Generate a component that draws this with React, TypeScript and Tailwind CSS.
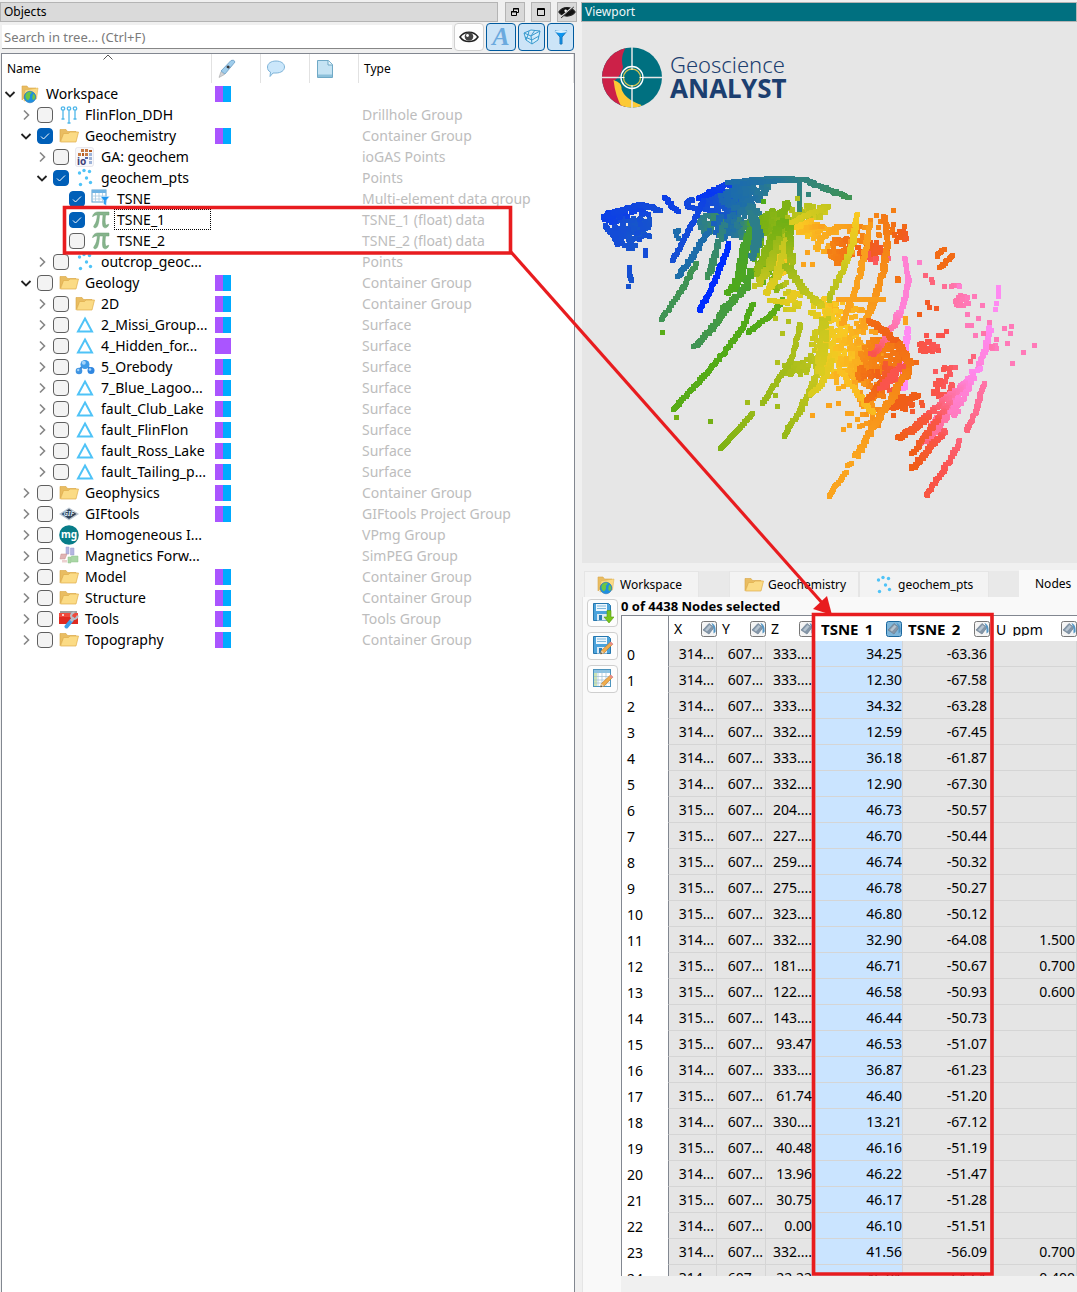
import React, { useState } from "react";

type IconName =
  | "globe" | "drill" | "folder" | "iogas" | "points" | "group" | "pi"
  | "surface" | "orebody" | "gif" | "mg" | "simpeg" | "tools";

type TreeRow = {
  level: number;
  name: string;
  icon: IconName;
  type?: string;
  arrow?: "open" | "closed";
  checked?: boolean;
  swatch?: "both" | "purple";
  focused?: boolean;
};

const treeRows: TreeRow[] = [
  { level: 0, name: "Workspace", icon: "globe", arrow: "open", swatch: "both" },
  { level: 1, name: "FlinFlon_DDH", icon: "drill", type: "Drillhole Group", arrow: "closed" },
  { level: 1, name: "Geochemistry", icon: "folder", type: "Container Group", arrow: "open", checked: true, swatch: "both" },
  { level: 2, name: "GA: geochem", icon: "iogas", type: "ioGAS Points", arrow: "closed" },
  { level: 2, name: "geochem_pts", icon: "points", type: "Points", arrow: "open", checked: true },
  { level: 3, name: "TSNE", icon: "group", type: "Multi-element data group", checked: true },
  { level: 3, name: "TSNE_1", icon: "pi", type: "TSNE_1 (float) data", checked: true, focused: true },
  { level: 3, name: "TSNE_2", icon: "pi", type: "TSNE_2 (float) data" },
  { level: 2, name: "outcrop_geoc...", icon: "points", type: "Points", arrow: "closed" },
  { level: 1, name: "Geology", icon: "folder", type: "Container Group", arrow: "open", swatch: "both" },
  { level: 2, name: "2D", icon: "folder", type: "Container Group", arrow: "closed", swatch: "both" },
  { level: 2, name: "2_Missi_Group...", icon: "surface", type: "Surface", arrow: "closed", swatch: "both" },
  { level: 2, name: "4_Hidden_for...", icon: "surface", type: "Surface", arrow: "closed", swatch: "purple" },
  { level: 2, name: "5_Orebody", icon: "orebody", type: "Surface", arrow: "closed", swatch: "both" },
  { level: 2, name: "7_Blue_Lagoo...", icon: "surface", type: "Surface", arrow: "closed", swatch: "both" },
  { level: 2, name: "fault_Club_Lake", icon: "surface", type: "Surface", arrow: "closed", swatch: "both" },
  { level: 2, name: "fault_FlinFlon", icon: "surface", type: "Surface", arrow: "closed", swatch: "both" },
  { level: 2, name: "fault_Ross_Lake", icon: "surface", type: "Surface", arrow: "closed", swatch: "both" },
  { level: 2, name: "fault_Tailing_p...", icon: "surface", type: "Surface", arrow: "closed", swatch: "both" },
  { level: 1, name: "Geophysics", icon: "folder", type: "Container Group", arrow: "closed", swatch: "both" },
  { level: 1, name: "GIFtools", icon: "gif", type: "GIFtools Project Group", arrow: "closed", swatch: "both" },
  { level: 1, name: "Homogeneous I...", icon: "mg", type: "VPmg Group", arrow: "closed" },
  { level: 1, name: "Magnetics Forw...", icon: "simpeg", type: "SimPEG Group", arrow: "closed" },
  { level: 1, name: "Model", icon: "folder", type: "Container Group", arrow: "closed", swatch: "both" },
  { level: 1, name: "Structure", icon: "folder", type: "Container Group", arrow: "closed", swatch: "both" },
  { level: 1, name: "Tools", icon: "tools", type: "Tools Group", arrow: "closed", swatch: "both" },
  { level: 1, name: "Topography", icon: "folder", type: "Container Group", arrow: "closed", swatch: "both" },
];

// X, Z, TSNE_1, TSNE_2, U_ppm (Y is elided to the same text everywhere)
const nodeRows: string[][] = [
  ["314...", "333....", "34.25", "-63.36", ""],
  ["314...", "333....", "12.30", "-67.58", ""],
  ["314...", "333....", "34.32", "-63.28", ""],
  ["314...", "332....", "12.59", "-67.45", ""],
  ["314...", "333....", "36.18", "-61.87", ""],
  ["314...", "332....", "12.90", "-67.30", ""],
  ["315...", "204....", "46.73", "-50.57", ""],
  ["315...", "227....", "46.70", "-50.44", ""],
  ["315...", "259....", "46.74", "-50.32", ""],
  ["315...", "275....", "46.78", "-50.27", ""],
  ["315...", "323....", "46.80", "-50.12", ""],
  ["314...", "332....", "32.90", "-64.08", "1.500"],
  ["315...", "181....", "46.71", "-50.67", "0.700"],
  ["315...", "122....", "46.58", "-50.93", "0.600"],
  ["315...", "143....", "46.44", "-50.73", ""],
  ["315...", "93.47", "46.53", "-51.07", ""],
  ["314...", "333....", "36.87", "-61.23", ""],
  ["315...", "61.74", "46.40", "-51.20", ""],
  ["314...", "330....", "13.21", "-67.12", ""],
  ["315...", "40.48", "46.16", "-51.19", ""],
  ["314...", "13.96", "46.22", "-51.47", ""],
  ["315...", "30.75", "46.17", "-51.28", ""],
  ["314...", "0.00", "46.10", "-51.51", ""],
  ["314...", "332....", "41.56", "-56.09", "0.700"],
  ["314...", "22.22", "46.01", "-51.61", "0.400"],
];

/* ---------- icons ---------- */

const Folder = () => (
  <>
    <path d="M1 3.500h6l1.500 2H17v3H4.500L1 15.500z" fill="#e9bd62" stroke="#d9a441" strokeWidth=".6" />
    <path d="M4.500 7.500h5l1.500-1.500h8.500l-2.500 10H1.500z" fill="#fbdb85" stroke="#dfae4a" strokeWidth=".7" />
  </>
);

const Points = () => (
  <g fill="#4fc3f7">
    <circle cx="4.500" cy="5" r="1.700" /><circle cx="9" cy="2.500" r="1.700" />
    <circle cx="14.500" cy="3.500" r="1.700" /><circle cx="11.500" cy="10" r="1.700" />
    <circle cx="15.500" cy="14.500" r="1.700" /><circle cx="5.500" cy="16.500" r="1.700" />
  </g>
);

const ItemIcon = ({ name }: { name: IconName }) => (
  <svg viewBox="0 0 20 20" className="h-5 w-5 shrink-0">
    {name === "folder" && <Folder />}
    {name === "points" && <Points />}
    {name === "globe" && (
      <>
        <path d="M2 2h5l1.500 2H16v9H5L2 16z" fill="#e9bd62" stroke="#dba94a" strokeWidth=".6" />
        <path d="M5 6l13-2-1.500 11L4 17z" fill="#fbdb85" stroke="#dfae4a" strokeWidth=".5" />
        <circle cx="10" cy="13" r="5.800" fill="#1e8fe0" stroke="#1565a8" strokeWidth=".5" />
        <path d="M5.500 11c1-3 4-3.500 6-3 .5 1.500-2 2-1.500 4s-1 3-2 4.500c-2-1-3-3-2.500-5.500zM13 10c1.500 0 2.500 2 2 4s-2 2.500-2.500 1 .2-3.500.5-5z" fill="#6cc644" />
      </>
    )}
    {name === "drill" && (
      <g fill="none" stroke="#4fb7ea" strokeWidth="1.300">
        <circle cx="4" cy="3.500" r="1.700" /><circle cx="10" cy="3.500" r="1.700" /><circle cx="16" cy="3.500" r="1.700" />
        <path d="M4 5.200V14M10 5.200V18M16 5.200V14M2.500 14h3M8.500 18h3M14.500 14h3" />
      </g>
    )}
    {name === "iogas" && (
      <>
        <rect x=".5" y=".5" width="18" height="19" rx="2" fill="#f7f7fa" stroke="#dcdce4" strokeWidth=".6" />
        <path d="M6 2h3v3H6zM10 2h3v3h-3zM3 6h3v3H3zM10 6h3v3h-3z" fill="#c77a44" />
        <path d="M14 3h3v2h-3zM7 6h2v3H7z" fill="#b55c22" />
        <path d="M14 6h3v3h-3zM14 10h3v3h-3zM14 14h3v3h-3z" fill="#9db3d8" />
        <path d="M10 10h3v2h-3z" fill="#5a6aa8" />
        <text x="2" y="18" fontSize="10" fontWeight="700" fill="#3d4179" fontFamily="Noto Sans, sans-serif">io</text>
      </>
    )}
    {name === "group" && (
      <>
        <rect x="1" y="1" width="14" height="12" fill="#fff" stroke="#5a9fd0" />
        <path d="M1 1h14v3H1z" fill="#6fb4e4" />
        <path d="M1 7h14M1 10h14M4.500 4v9M8 4v9M11.500 4v9" stroke="#a8cbe2" strokeWidth=".8" />
        <path d="M9.500 7.500h9l-3.300 4v5l-2.500-1.500v-3.500z" fill="#1e96f0" stroke="#e2f2ff" strokeWidth=".5" />
      </>
    )}
    {name === "pi" && (
      <path d="M1.500 6.500C2.500 3 4.500 2 7 2h11v3h-3.500c-.4 4-.7 8 .2 9.500.6 1 1.800.6 2.500-.5l.6.500c-.8 2.300-2 3.300-3.500 3.300-3.300 0-3-4-2.300-12.800H8.500c-.3 4.500-.8 8-1.800 10.500-.7 1.700-1.700 2.300-2.700 2.300-1.400 0-1.800-1.300-.8-2.500C5.500 12.500 6 9 6.400 5c-2 0-3.200.1-4.200 1.500z" fill="#86b48c" stroke="#6b9c72" strokeWidth=".5" />
    )}
    {name === "surface" && <path d="M10 3.500l7 13H3z" fill="none" stroke="#4fc3f7" strokeWidth="2" />}
    {name === "orebody" && (
      <>
        <path d="M3 14l7-7 7 7" stroke="#3b7fd0" strokeWidth="2" fill="none" />
        <circle cx="10" cy="7.500" r="4.500" fill="#3f9be8" /><circle cx="4" cy="14" r="3.300" fill="#3f94e2" />
        <circle cx="16" cy="13.500" r="3.500" fill="#2f86e0" /><circle cx="8.800" cy="5.800" r="2" fill="#a5d4fa" />
        <circle cx="3.200" cy="13" r="1.200" fill="#a5d4fa" /><circle cx="15" cy="12.500" r="1.300" fill="#a5d4fa" />
      </>
    )}
    {name === "gif" && (
      <>
        <path d="M0 10l10-6.500L20 10l-10 6.500z" fill="#b9c4d0" />
        <path d="M2.500 10L10 5l7.500 5-7.500 5z" fill="#2e4158" />
        <text x="4.500" y="12.300" fontSize="6.500" fontStyle="italic" fontWeight="700" fill="#cfe0f0" fontFamily="Noto Sans, sans-serif">GIF</text>
      </>
    )}
    {name === "mg" && (
      <>
        <circle cx="10" cy="10" r="9.800" fill="#087d89" />
        <text x="10" y="13" textAnchor="middle" fontSize="10" fontWeight="700" fill="#fff" fontFamily="Noto Sans, sans-serif">mg</text>
      </>
    )}
    {name === "simpeg" && (
      <>
        <path d="M7 1h3v7H7zM11.500 2H15v7h-3.500z" fill="#b4b5e0" stroke="#9c9dd0" strokeWidth=".5" />
        <path d="M2 8h6l-2 5H1z" fill="#e0b4b4" stroke="#c89090" strokeWidth=".5" />
        <path d="M12.500 10H19v6h-6.500zM9 11h3v6H9z" fill="#a9d6a5" stroke="#8cc088" strokeWidth=".5" />
        <path d="M3 14h5v2.500H3z" fill="#ecd0d0" />
      </>
    )}
    {name === "tools" && (
      <>
        <path d="M1 2h17v2H1z" fill="#9b9b9b" /><path d="M0 4h19v11H0z" fill="#df2a20" />
        <path d="M0 4h19v4H0z" fill="#ef4a3c" /><circle cx="4" cy="6" r="1" fill="#fff" />
        <path d="M7.500 17.500l5-6" stroke="#3d9fe8" strokeWidth="4" strokeLinecap="round" />
        <path d="M12 12l3-3.500" stroke="#b8bec6" strokeWidth="3" />
        <path d="M18.500 6.500a3.200 3.200 0 1 1-3-3" fill="none" stroke="#b8bec6" strokeWidth="2.200" />
      </>
    )}
  </svg>
);

const Arrow = ({ dir }: { dir?: "open" | "closed" }) => (
  <svg viewBox="0 0 12 12" className="h-3 w-3 shrink-0" fill="none">
    {dir === "open" && <path d="M1.500 4L6 8.500 10.500 4" stroke="#222" strokeWidth="1.800" />}
    {dir === "closed" && <path d="M4 1.500L8.500 6 4 10.500" stroke="#868686" strokeWidth="1.600" />}
  </svg>
);

const PaintIcon = ({ active }: { active?: boolean }) => (
  <svg viewBox="0 0 16 16" className="h-4 w-4 shrink-0">
    <rect x=".5" y=".5" width="15" height="15" rx="2" fill={active ? "#7fb6da" : "#f4f4f4"} stroke={active ? "#1a679e" : "#777"} />
    <path d="M2 9l6-6.500 5 4L8 13z" fill="#8496a8" stroke="#6d7f91" strokeWidth=".7" />
    <path d="M4 9l4.500-5 2 1.500L6 10.500z" fill="#b5c3cf" />
    <path d="M10.500 2c3 1 4.500 4 4 9l-2 1.500V7z" fill="#5295c4" />
  </svg>
);

const SaveIcon = ({ kind }: { kind: "export" | "edit" | "table" }) => (
  <svg viewBox="0 0 22 22" className="h-[22px] w-[22px]">
    {kind === "table" ? (
      <>
        <rect x="1.500" y="1.500" width="17" height="17" fill="#fff" stroke="#4d94bd" />
        <path d="M2 2h16v3H2z" fill="#8cc4e4" />
        <path d="M2 5h3v13H2z" fill="#cbe4b4" />
        <path d="M2 8.500h16M2 12h16M2 15h16M6 2v16M10 2v16M14 2v16" stroke="#9ebfd2" strokeWidth=".7" />
      </>
    ) : (
      <>
        <path d="M1.500 1.500h15l2 2v15h-17z" fill="#4ba3dc" stroke="#2677ae" />
        <path d="M4 2h11v7H4z" fill="#eef7fd" /><path d="M5 4h9M5 6.500h9" stroke="#7fb7da" />
        <path d="M5 12h10v6.500H5z" fill="#dceaf4" /><path d="M7 13h3v5H7z" fill="#2d7db5" />
      </>
    )}
    {kind === "export" ? (
      <path d="M15 8.500h4V15h3l-5 6-5-6h3z" fill="#7ac51c" stroke="#559a10" strokeWidth=".6" />
    ) : (
      <>
        <path d="M8.500 19l1-3.500L18.500 7l2.200 2.200-8.700 8.800z" fill="#f0ac4c" stroke="#b5762a" strokeWidth=".6" />
        <path d="M17.300 8.200L18.800 6.700l2.400 2.400-1.500 1.500z" fill="#e88a8a" />
        <path d="M8.500 19l1-3.500 2.500 2.500z" fill="#e8d4b4" /><path d="M8.500 19l.5-1.700 1.200 1.200z" fill="#333" />
      </>
    )}
  </svg>
);

const Eye = ({ off }: { off?: boolean }) => (
  <svg viewBox="0 0 20 14" className="h-[14px] w-5" fill="none">
    <path d="M1 7c4-6.500 14-6.500 18 0-4 6-14 6-18 0z" fill={off ? "#111" : "#fff"} stroke="#222" strokeWidth="1.500" />
    <circle cx="10" cy="6.500" r="4.300" fill={off ? "#111" : "#444"} />
    <circle cx="8.500" cy="5.500" r="1.400" fill="#fff" />
    {off && <path d="M3 13L17 1" stroke="#d9d9d9" strokeWidth="2" />}
    {off && <path d="M3.500 13.500L17.500 1.500" stroke="#111" strokeWidth="1" />}
  </svg>
);

/* ---------- point cloud ---------- */

const ramp: number[][] = [
  [0, 44, 255], [20, 76, 215], [28, 108, 172], [44, 126, 138], [64, 148, 84], [78, 170, 24],
  [126, 178, 20], [176, 192, 28], [218, 204, 32], [250, 200, 34], [250, 164, 30],
  [244, 126, 20], [240, 94, 24], [250, 84, 76], [255, 116, 168], [255, 140, 250],
];

const rampColor = (value: number) => {
  const v = Math.max(0, Math.min(14.999, value));
  const i = Math.floor(v);
  const mix = ramp[i].map((c, k) => Math.round(c + (ramp[i + 1][k] - c) * (v - i)));
  return `rgb(${mix.join(",")})`;
};

// [value at start, value at end, spread, x1, y1, x2, y2, ...]
const strands: number[][] = [
  [0.6, 1, 5, 603, 217, 618, 211, 640, 204, 660, 210],
  [1, 1, 3, 605, 225, 612, 233, 618, 244], [1, 1.2, 1, 629, 267, 629, 275, 631, 280],
  [1, 1, 0, 645, 250, 645, 255], [0.6, 0.7, 3, 664, 197, 677, 211],
  [0.8, 0.9, 3, 685, 203, 692, 199], [0.8, 0.9, 2, 686, 206, 695, 208],
  [0.3, 0.4, 3, 698, 198, 712, 192], [0.3, 0.6, 9, 710, 192, 720, 188, 728, 184],
  [2, 4, 6, 728, 182, 757, 179, 777, 178, 803, 179, 830, 190, 847, 197],
  [2, 3, 4, 742, 183, 780, 180, 795, 180],
  [0.7, 1.1, 2, 703, 200, 690, 227, 672, 260], [2, 2.100, 3, 708, 230, 693, 255, 677, 276],
  [0, 0, 2, 729, 243, 715, 280, 699, 310],
  [4, 4, 2, 696, 263, 683, 287, 661, 319], [3, 3.900, 4, 724, 224, 717, 245, 708, 277],
  [4.500, 5, 7, 753, 222, 744, 250, 740, 275, 729, 293], [3, 3, 7, 751, 212, 758, 235, 752, 258],
  [4.800, 4, 5, 751, 270, 745, 288, 724, 308, 712, 328, 695, 346],
  [4.400, 4.300, 7, 730, 303, 721, 314],
  [5, 5.200, 2, 752, 304, 742, 328, 723, 353, 704, 375, 673, 409],
  [5.600, 5, 3, 783, 299, 772, 313, 748, 332],
  [7, 6.500, 2, 800, 324, 791, 360, 777, 380, 762, 403], [6.500, 6, 1, 752, 413, 736, 431, 720, 448],
  [8, 6.500, 4, 826, 345, 815, 378, 801, 408, 783, 436],
  [8.400, 8, 3, 831, 360, 822, 383, 811, 394],
  [3, 3.500, 1, 799, 184, 799, 209], [6, 6, 5, 787, 202, 780, 215],
  [5.700, 6.500, 8, 783, 220, 770, 245, 756, 275], [6.500, 7.500, 6, 779, 238, 770, 265, 756, 286],
  [7.500, 8.200, 5, 785, 240, 777, 275, 765, 293],
  [5.800, 6.800, 5, 788, 225, 791, 262],
  [6.500, 7.800, 6, 786, 265, 803, 290, 822, 306],
  [8, 8.500, 5, 770, 300, 788, 302, 795, 292],
  [7.500, 8, 3, 828, 206, 812, 212, 792, 222],
  [9.300, 9.800, 4, 798, 232, 820, 226, 836, 232],
  [9.500, 10, 6, 808, 227, 822, 226], [9.700, 10.200, 5, 820, 238, 838, 226, 856, 226],
  [9, 7, 3, 857, 214, 852, 243, 843, 268, 828, 300],
  [10.200, 10, 3, 869, 224, 864, 255, 855, 290, 842, 323],
  [11.200, 10, 4, 884, 216, 887, 240, 882, 275, 873, 303, 861, 326],
  [11.500, 11.500, 1, 898, 280, 897, 278], [10, 10.200, 1, 838, 299, 883, 299],
  [14.500, 14.600, 2, 905, 258, 908, 280, 903, 305, 896, 320], [14.500, 13, 5, 899, 312, 886, 338, 872, 354],
  [14.900, 14.900, 3, 907, 328, 905, 356, 904, 388],
  [11.500, 12, 6, 869, 320, 883, 330, 898, 343], [11.500, 11, 6, 898, 343, 909, 362, 905, 378],
  [12, 12, 9, 893, 408, 900, 402, 918, 394],
  [11, 10, 5, 907, 370, 893, 395, 874, 424, 856, 456], [10, 10, 2, 850, 463, 848, 465],
  [10, 10, 2, 845, 472, 828, 496], [9.200, 9.400, 4, 838, 370, 855, 390, 872, 412],
  [12.500, 11.500, 5, 892, 368, 868, 400], [13, 13, 8, 900, 365, 880, 388],
  [7.500, 8, 8, 824, 318, 822, 345, 819, 373],
  [14.500, 13.500, 9, 965, 382, 951, 405, 934, 425, 922, 443],
  [14.300, 13.800, 7, 958, 400, 945, 415, 930, 437],
  [14.900, 14.600, 3, 990, 327, 985, 348, 976, 370], [14.900, 14.300, 8, 976, 368, 965, 388, 952, 415],
  [14.600, 12, 5, 966, 382, 943, 400, 924, 418, 898, 438],
  [12.800, 12, 6, 928, 416, 912, 430, 900, 437],
  [13.800, 12, 4, 948, 402, 935, 422, 912, 453],
  [13.300, 12, 5, 946, 430, 930, 447, 912, 468],
  [14, 13.500, 2, 983, 383, 975, 412, 966, 430], [13.500, 12.800, 3, 960, 440, 948, 462, 926, 495],
  [11.600, 11.600, 2, 936, 256, 943, 249], [11.600, 11.600, 2, 940, 267, 952, 255],
  [14.900, 14.900, 0, 998, 287, 998, 296], [14, 14.500, 3, 954, 285, 960, 286],
];

// [cx, cy, rx, ry, count, lowest value, highest value]
const blobs: number[][] = [
  [628, 228, 18, 13, 90, 0.9, 1.5], [643, 228, 8, 14, 20, 1, 1.3], [628, 246, 10, 4, 8, 1.1, 1.3],
  [640, 212, 18, 8, 20, 0.6, 1], [611, 216, 9, 6, 16, 0.5, 0.8], [676, 234, 5, 5, 6, 1.8, 2.2],
  [723, 205, 22, 12, 120, 0.8, 2], [740, 196, 20, 11, 110, 1.8, 2.5], [710, 224, 13, 10, 45, 2.8, 4],
  [725, 226, 16, 12, 50, 1.4, 3], [758, 189, 14, 5, 20, 2.2, 3], [744, 215, 16, 12, 45, 2, 3.2],
  [739, 235, 12, 18, 22, 2, 4.2], [753, 234, 9, 18, 40, 3.6, 5],
  [774, 224, 15, 14, 150, 5.8, 6.7], [778, 252, 14, 22, 60, 6, 7.6], [761, 258, 12, 20, 34, 5, 7],
  [774, 277, 14, 16, 30, 5.2, 7.8], [782, 257, 8, 17, 60, 8.4, 9.6], [800, 216, 17, 10, 36, 6.8, 8],
  [814, 211, 15, 8, 24, 7, 7.9], [809, 228, 15, 8, 50, 8.8, 10], [823, 240, 14, 12, 14, 9.4, 10.2],
  [824, 310, 16, 12, 46, 8, 10], [843, 320, 23, 18, 50, 8.4, 10.2], [790, 300, 16, 10, 14, 7.5, 8.3],
  [796, 368, 14, 7, 40, 6.8, 7.2], [815, 360, 10, 8, 10, 7.1, 7.6], [816, 340, 6, 12, 14, 7.5, 8.2],
  [841, 250, 12, 14, 55, 10.8, 11.8], [857, 240, 12, 18, 18, 10, 11.5], [872, 249, 16, 8, 36, 11.8, 12.6],
  [875, 257, 14, 5, 12, 12.8, 13.6], [882, 226, 24, 12, 14, 10.2, 12], [900, 236, 7, 6, 12, 11.8, 12.4],
  [840, 350, 22, 26, 150, 8.4, 9.6], [859, 352, 24, 28, 110, 9.2, 10.6], [882, 355, 22, 18, 150, 10.6, 11.6],
  [864, 374, 10, 8, 26, 11, 12], [890, 377, 15, 15, 34, 11.8, 13.8], [869, 391, 17, 12, 22, 9.8, 11.8],
  [866, 415, 17, 13, 26, 9.8, 11], [843, 380, 14, 9, 14, 9.4, 10.2],
  [927, 346, 11, 6, 38, 12.8, 13.2], [949, 370, 7, 7, 10, 13, 13.4], [943, 389, 11, 10, 26, 12.9, 13.3],
  [906, 402, 15, 7, 30, 11.8, 12.5], [962, 300, 8, 7, 20, 14, 14.3], [992, 347, 5, 3, 8, 14, 14.3],
];

// single samples: [x, y, value]
const singles: number[][] = [
  [662, 332, 5.2], [676, 417, 5.8], [710, 421, 5.8], [747, 402, 6.7], [775, 395, 6.7], [777, 406, 6.7],
  [777, 362, 7], [782, 333, 7], [775, 318, 7], [788, 321, 7], [763, 201, 5], [797, 198, 7], [808, 194, 3.3],
  [812, 415, 10], [828, 405, 10], [812, 264, 10], [807, 252, 10], [803, 264, 10], [829, 251, 11],
  [893, 210, 11], [919, 262, 14.4], [925, 275, 13.5], [931, 279, 13.5], [932, 282, 13.5], [944, 286, 13.8],
  [951, 286, 14], [996, 303, 14.9], [995, 309, 14.9], [982, 305, 14.2], [974, 296, 14.2], [967, 314, 14.2],
  [978, 318, 14.2], [989, 322, 14.2], [971, 325, 14.2], [967, 325, 14.2], [975, 335, 14.2], [983, 333, 14],
  [1004, 328, 14.2], [1011, 326, 14.2], [1010, 333, 14.2], [996, 339, 14.2], [1007, 343, 14.2],
  [1034, 345, 14.2], [1023, 352, 14.2], [1012, 363, 14.2], [927, 302, 12.3], [929, 307, 12.3],
  [936, 308, 12.3], [919, 314, 12], [938, 335, 13], [942, 335, 13], [946, 331, 13], [926, 335, 13],
  [935, 371, 13.2], [973, 356, 13.5], [970, 361, 13.5], [829, 405, 10], [838, 403, 10], [847, 413, 10],
  [843, 429, 10], [849, 425, 10], [898, 279, 11.3], [897, 280, 11.3], [905, 322, 10], [905, 318, 10],
  [916, 362, 11.6], [893, 415, 12], [912, 411, 12.5], [922, 405, 12.5], [938, 350, 13], [628, 286, 1.2],
];

const buildCloud = () => {
  let seed = 7;
  const rand = () => {
    seed = (seed * 16807) % 2147483647;
    return seed / 2147483647;
  };
  const cells: { x: number; y: number; fill: string }[] = [];
  const put = (x: number, y: number, v: number) =>
    cells.push({ x: Math.round(x - 2), y: Math.round(y - 2), fill: rampColor(v) });

  blobs.forEach(([cx, cy, rx, ry, count, low, high]) => {
    for (let i = 0; i < count; i++) {
      const a = rand() * Math.PI * 2;
      const r = Math.sqrt(rand());
      const x = Math.cos(a) * r;
      put(cx + x * rx, cy + Math.sin(a) * r * ry, low + (high - low) * ((x + 1) / 2) * (0.7 + rand() * 0.3));
    }
  });
  strands.forEach(([start, end, spread, ...pts]) => {
    const last = pts.length / 2 - 1;
    for (let i = 0; i < last; i++) {
      const [x1, y1, x2, y2] = pts.slice(i * 2, i * 2 + 4);
      const steps = Math.max(1, Math.ceil(Math.hypot(x2 - x1, y2 - y1) / (spread > 4 ? 1 : 1.5)));
      for (let s = 0; s <= steps; s++) {
        const k = s / steps;
        const v = start + (end - start) * ((i + k) / last);
        put(x1 + (x2 - x1) * k + (rand() - 0.5) * spread, y1 + (y2 - y1) * k, v);
      }
    }
  });
  singles.forEach(([x, y, v]) => put(x, y, v));
  return cells;
};

const cloud = buildCloud();

const Viewport = () => (
  <svg viewBox="582 22 495 541" preserveAspectRatio="xMinYMin meet" className="h-full w-full">
    <clipPath id="disc"><circle cx="632" cy="77.500" r="30" /></clipPath>
    <g clipPath="url(#disc)">
      <path d="M602 47h60v61h-60z" fill="#007080" />
      <path d="M602 47h24q-6 10-3 20-2 9-9 14 4 12 10 20l2 10h-24z" fill="#cc2148" />
      <path d="M613.500 80q9 3 8 9 3 10 20 16l-4 5h-14q-8-12-10-30z" fill="#fcc935" />
    </g>
    <path d="M632 47v61M602 77.500h60" stroke="#e6e6e6" strokeWidth="1.500" />
    <circle cx="632" cy="77.500" r="11" fill="#007080" stroke="#fff" strokeWidth="1.300" />
    <circle cx="632" cy="77.500" r="8.500" fill="none" stroke="#d6c451" strokeWidth="1.300" />
    <path d="M632 66v4M632 85v4M620.500 77.500h4M639.500 77.500h4" stroke="#fff" />
    <text x="670" y="73" fontSize="22" fontWeight="300" fill="#1c3f70" fontFamily="Noto Sans, sans-serif">Geoscience</text>
    <text x="670" y="98" fontSize="26" fontWeight="700" fill="#1c3f70" fontFamily="Noto Sans, sans-serif">ANALYST</text>
    <g shapeRendering="crispEdges">
      {cloud.map((c, i) => (
        <rect key={i} x={c.x} y={c.y} width="5" height="5" fill={c.fill} />
      ))}
    </g>
  </svg>
);

/* ---------- panels ---------- */

const treeGrid = "grid grid-cols-[209px_49px_49px_49px_1fr]";

const indent = ["pl-[2px]", "pl-[18px]", "pl-[34px]", "pl-[50px]"];

const ObjectsTree = () => {
  const [checked, setChecked] = useState(treeRows.map((row) => !!row.checked));

  return (
    <div role="tree" aria-label="Objects" className="ml-px mr-[2px] mt-[2px] min-h-0 flex-1 overflow-hidden border border-b-0 border-[#828790] bg-white">
      <div className={`${treeGrid} h-[29px] text-xs`}>
        <div className="relative flex items-center pl-[5px]">
          Name
          <svg viewBox="0 0 10 6" className="absolute left-[101px] top-0 h-[6px] w-[10px]">
            <path d="M.5 5.500L5 1l4.500 4.500" fill="none" stroke="#555" />
          </svg>
        </div>
        <div className="flex items-center border-l border-[#e2e2e2] pl-[5px]">
          <svg viewBox="0 0 20 20" className="h-5 w-5">
            <path d="M2 18.500l2-6 3.500 3z" fill="#cfd3d8" stroke="#999" strokeWidth=".5" />
            <path d="M4 12L14 1.500q3-1.500 4 1.500L8 15z" fill="#9fcdec" stroke="#6a9dc4" strokeWidth=".8" />
            <path d="M9 8l2-2 2.500 2-2 2z" fill="#6b7784" /><circle cx="11" cy="8" r="1" fill="#222" />
          </svg>
        </div>
        <div className="flex items-center border-l border-[#e2e2e2] pl-[5px]">
          <svg viewBox="0 0 20 20" className="h-5 w-5">
            <path d="M10 2c5 0 8.500 2.500 8.500 6S15 14 10 14l-3 0-3 3.500.5-4.500C2 12 1.500 10 1.500 8 1.500 4.500 5 2 10 2z" fill="#cbe7fb" stroke="#7fb4d8" />
          </svg>
        </div>
        <div className="flex items-center border-l border-[#e2e2e2] pl-[5px]">
          <svg viewBox="0 0 20 20" className="h-5 w-5">
            <path d="M2.500 1.500h11l4 4v13h-15z" fill="#c5e3f3" stroke="#6fa9c6" />
            <path d="M13 1.500v4.500h4.500" fill="#eaf6fc" stroke="#6fa9c6" /><path d="M3 15.500h14v2.500H3z" fill="#8cc0da" />
          </svg>
        </div>
        <div className="flex items-center border-l border-r border-[#e2e2e2] pl-[5px]">Type</div>
      </div>

      {treeRows.map((row, i) => (
        <div key={row.name} role="treeitem" aria-level={row.level + 1} className={`${treeGrid} h-[21px] text-sm leading-[21px]`}>
          <div className={`flex min-w-0 items-center ${indent[row.level]}`}>
            <Arrow dir={row.arrow} />
            {row.level > 0 && (
              <span className="relative ml-[5px] mr-[2px] flex h-4 w-4 shrink-0">
                <input
                  id={`item-${i}`}
                  type="checkbox"
                  checked={checked[i]}
                  onChange={() => setChecked(checked.map((c, k) => (k === i ? !c : c)))}
                  className="h-4 w-4 appearance-none rounded-[4px] border border-[#5f5f5f] bg-[#f3f3f3] checked:border-[#005fb8] checked:bg-[#005fb8]"
                />
                {checked[i] && (
                  <svg viewBox="0 0 16 16" className="pointer-events-none absolute inset-0 h-4 w-4">
                    <path d="M4 8.500l2.500 2.500L12 5.500" fill="none" stroke="#fff" />
                  </svg>
                )}
              </span>
            )}
            <span className="ml-1 flex"><ItemIcon name={row.icon} /></span>
            <label
              htmlFor={`item-${i}`}
              className={row.focused
                ? "ml-[3px] h-[21px] w-[98px] border border-dotted border-black pl-[2px] leading-[19px]"
                : "ml-[6px] whitespace-nowrap"}
            >
              {row.name}
            </label>
          </div>
          <div className="flex items-center pl-1">
            {row.swatch && (
              <div className="flex h-4 w-4 bg-[#aa55ff]">
                {row.swatch === "both" && <div className="ml-2 h-4 w-2 bg-[#00aaff]" />}
              </div>
            )}
          </div>
          <div />
          <div />
          <div className="truncate pl-1 text-[#bdbdbd]">{row.type}</div>
        </div>
      ))}
    </div>
  );
};

const ObjectsPanel = () => (
  <section className="flex min-h-0 min-w-0 flex-col pt-[2px]">
    <div className="flex h-5 gap-[6px]">
      <h2 className="mr-px flex flex-1 items-center border border-[#b4b4b4] bg-[#dadada] pl-[3px] text-xs">Objects</h2>
      <button aria-label="Float" className="flex w-5 items-center justify-center border border-[#b4b4b4] bg-[#d9d9d9]">
        <svg viewBox="0 0 10 10" className="h-[10px] w-[10px]" fill="none" stroke="#000">
          <path d="M3.500 4V1.500h5v4H6.500M1.500 4.500h5v4h-5zM3 2h6M1 5h6" />
        </svg>
      </button>
      <button aria-label="Maximize" className="flex w-5 items-center justify-center border border-[#b4b4b4] bg-[#d9d9d9]">
        <svg viewBox="0 0 10 10" className="h-[10px] w-[10px]" fill="none" stroke="#000">
          <path d="M1.500 1.500h7v7h-7zM1 2.500h8" />
        </svg>
      </button>
      <button aria-label="Hide" className="flex w-5 items-center justify-center border border-[#b4b4b4] bg-[#d9d9d9]">
        <Eye off />
      </button>
    </div>
    <div className="mr-[3px] mt-px flex h-7 items-center gap-[2px] pl-[2px]">
      <input
        type="text"
        aria-label="Search in tree"
        placeholder="Search in tree... (Ctrl+F)"
        className="h-6 min-w-0 flex-1 border-b border-[#868686] bg-white pl-[2px] text-[13px] placeholder:text-[#7b7b7b]"
      />
      <button aria-label="Visible" className="flex h-7 w-[30px] items-center justify-center rounded-[4px] border border-[#d0d0d0] bg-[#fdfdfd]">
        <Eye />
      </button>
      <button aria-label="Match case" className="flex h-7 w-[30px] items-center justify-center rounded-[4px] border border-[#005a9e] bg-[#cce4f7] font-['Liberation_Serif',serif] text-[26px] font-bold italic leading-none text-[#6aa9de]">
        A
      </button>
      <button aria-label="Objects" className="flex h-7 w-[27px] items-center justify-center rounded-[4px] border border-[#005a9e] bg-[#cce4f7]">
        <svg viewBox="0 0 18 16" className="h-4 w-[18px]" fill="#d6effc" stroke="#3a9bcf">
          <path d="M1 4l7-3 9 1-2 9-6 4-6-4zM1 4l7 3 9-5M8 7l1 8M6 2l-1 4-2 5M2 8l7 3 7-4M8 7l4-6" />
        </svg>
      </button>
      <button aria-label="Filter" className="flex h-7 w-[27px] items-center justify-center rounded-[4px] border border-[#005a9e] bg-[#cce4f7]">
        <svg viewBox="0 0 14 16" className="h-4 w-[14px]">
          <path d="M1 2l5 6v7h2V8l5-6z" fill="#0c96f2" stroke="#1677bd" /><ellipse cx="7" cy="2.500" rx="6" ry="1.500" fill="#d9f0ff" />
        </svg>
      </button>
    </div>
    <ObjectsTree />
  </section>
);

const columns = [
  { label: "X", className: "border-l border-[#828790] font-normal" },
  { label: "Y", className: "font-normal" },
  { label: "Z", className: "pr-px font-normal" },
  { label: "TSNE_1", className: "pr-px text-[15px] font-bold", active: true },
  { label: "TSNE_2", className: "pr-px text-[15px] font-bold" },
  { label: "U_ppm", className: "font-normal" },
];

const NodesTable = () => (
  <div className="mb-4 min-h-0 flex-1 overflow-hidden border-l border-t border-[#828790] bg-white">
    <table className="w-full table-fixed border-separate border-spacing-0 text-sm">
      <colgroup>
        <col className="w-[46px]" />
        <col className="w-[49px]" />
        <col className="w-[49px]" />
        <col className="w-[50px]" />
        <col className="w-[87px]" />
        <col className="w-[88px]" />
        <col />
      </colgroup>
      <thead>
        <tr className="h-[25px]">
          <th className="p-0" aria-label="Index" />
          {columns.map((col) => (
            <th key={col.label} className={`py-0 pl-[5px] text-left ${col.className}`}>
              <div className="flex items-center justify-between">
                <span className={col.label.includes("_") ? "block h-[15px] overflow-hidden leading-[17px]" : "leading-[17px]"}>
                  {col.label}
                </span>
                <PaintIcon active={col.active} />
              </div>
            </th>
          ))}
        </tr>
      </thead>
      <tbody>
        {nodeRows.map(([x, z, t1, t2, u], i) => (
          <tr key={i} className="h-[26px] bg-[#e5e5e5] text-right leading-[25px] [&>td]:overflow-hidden [&>td]:whitespace-nowrap [&>td]:border-b [&>td]:border-r [&>td]:border-[#d5d5d5] [&>td]:p-0">
            <th className="bg-white p-0 pl-[5px] text-left font-normal">{i}</th>
            <td className="border-l border-l-[#828790]!"><div className="pr-[2px]">{x}</div></td>
            <td><div className="pr-[2px]">607...</div></td>
            <td><div className="pr-[3px]">{z}</div></td>
            <td className="bg-[#cae4ff]">{t1}</td>
            <td><div className="pr-[3px]">{t2}</div></td>
            <td><div className="pr-px">{u}</div></td>
          </tr>
        ))}
      </tbody>
    </table>
  </div>
);

const DataPanel = () => (
  <div className="flex min-h-0 flex-1 flex-col text-xs">
    <div role="tablist" className="flex h-[27px] items-end overflow-hidden pl-[3px]">
      <button role="tab" className="flex h-[26px] w-[115px] shrink-0 items-center gap-1 border border-b-0 border-[#e5e5e5] bg-[#f3f3f3] pl-[11px]">
        <ItemIcon name="globe" />Workspace
      </button>
      <div className="h-[26px] w-[30px] shrink-0 bg-[#e9e9e9]" />
      <button role="tab" className="flex h-[26px] w-[130px] shrink-0 items-center gap-1 border border-b-0 border-[#e5e5e5] bg-[#f3f3f3] pl-[14px]">
        <ItemIcon name="folder" />Geochemistry
      </button>
      <button role="tab" className="flex h-[26px] w-[130px] shrink-0 items-center gap-1 border border-b-0 border-[#e5e5e5] bg-[#f3f3f3] pl-[14px]">
        <ItemIcon name="points" />geochem_pts
      </button>
      <div className="h-[26px] w-[30px] shrink-0 bg-[#e9e9e9]" />
      <button role="tab" aria-selected="true" className="h-[27px] flex-1 bg-[#f9f9f9] pl-4 text-left">Nodes</button>
    </div>
    <div className="ml-px flex min-h-0 flex-1 border-l border-[#e5e5e5]">
      <div className="flex w-[38px] flex-col gap-[5px] bg-[#f9f9f9] pl-1 pt-[2px]">
        {(["export", "edit", "table"] as const).map((kind) => (
          <button key={kind} aria-label={kind} className="flex h-7 w-[31px] items-center justify-center rounded-[4px] border border-[#cfcfcf] bg-[#fdfdfd]">
            <SaveIcon kind={kind} />
          </button>
        ))}
      </div>
      <div className="flex min-h-0 min-w-0 flex-1 flex-col">
        <div className="h-[18px] bg-[#f9f9f9] text-[13px] font-bold leading-[18px]">0 of 4438 Nodes selected</div>
        <NodesTable />
      </div>
    </div>
  </div>
);

const Annotations = () => (
  <svg className="pointer-events-none absolute left-0 top-0 h-[1292px] w-[1077px]" fill="none" stroke="#e81c1f">
    <path d="M64.500 207.500h446v45.500h-446z" strokeWidth="3.600" />
    <path d="M511 252L824 605" strokeWidth="3.200" />
    <path d="M832 615l-19-6 14-13z" fill="#e81c1f" stroke="none" />
    <path d="M813.500 614.500h178.500v659.500h-178.500z" strokeWidth="3.600" />
  </svg>
);

const App: React.FC = () => (
  <div className="relative grid h-screen grid-cols-[577fr_496fr] grid-rows-1 gap-1 overflow-hidden bg-[#f0f0f0] font-['Noto_Sans',sans-serif] text-black">
    <ObjectsPanel />
    <section className="flex min-h-0 min-w-0 flex-col pt-[2px]">
      <h2 className="flex h-5 shrink-0 items-center border border-[#b4b4b4] bg-[#007080] pl-[3px] text-xs text-[#eef6f7]">Viewport</h2>
      <div className="mb-[7px] ml-px h-[541px] shrink-0 bg-[#e6e6e6]">
        <Viewport />
      </div>
      <DataPanel />
    </section>
    <Annotations />
  </div>
);

export default App;
